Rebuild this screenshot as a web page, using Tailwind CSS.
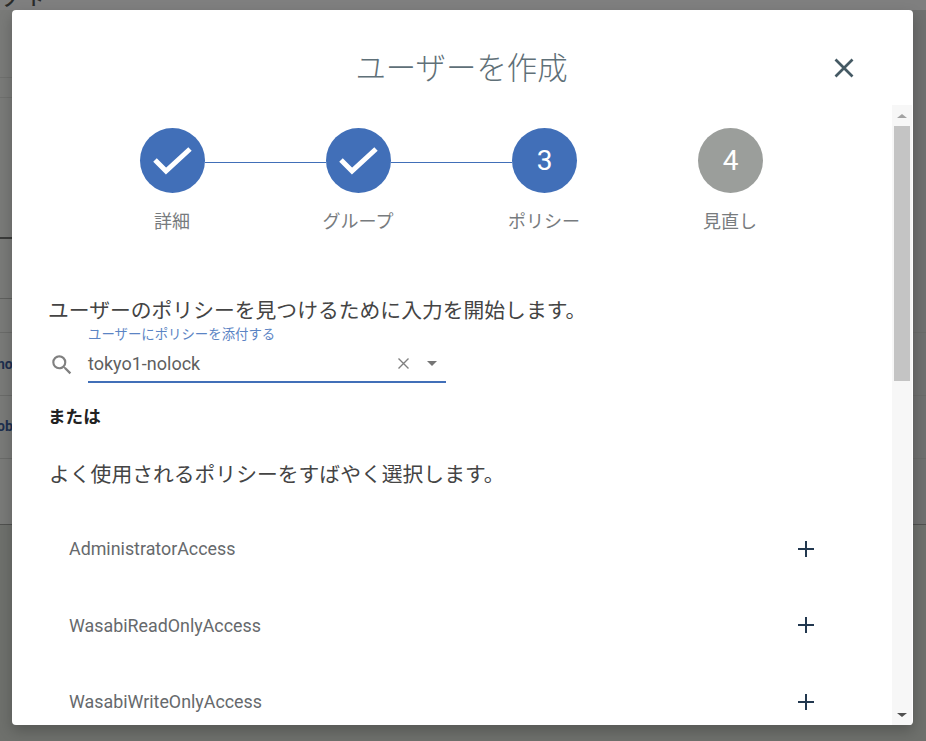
<!DOCTYPE html>
<html lang="ja">
  <head>
    <meta charset="UTF-8">
    <title>ユーザーを作成</title>
    <script src="https://cdn.jsdelivr.net/npm/@tailwindcss/browser@4"></script>
  </head>

  <body class="relative w-[926px] h-[741px] overflow-hidden bg-[#797a78] font-['Roboto','Noto_Sans_CJK_JP',sans-serif]">
    <!-- page behind the dialog, only the edges show -->
    <div class="absolute inset-0 text-[#1d2f4f] font-bold text-[14px]">
      <div class="absolute inset-x-0 top-0 h-[10px] bg-[#7f7f7f]"></div>
      <div class="absolute right-0 top-[10px] w-[14px] h-[515px] bg-[#6f706f]"></div>
      <div class="absolute inset-x-0 top-[525px] bottom-0 bg-[#6e706c]"></div>
      <div class="absolute left-0 top-[77px] w-[12px] h-px bg-[#6f706e]"></div>
      <div class="absolute left-0 top-[97px] w-[12px] h-px bg-[#6f706e]"></div>
      <div class="absolute left-0 top-[237px] w-[12px] h-[2px] bg-[#3a3b3a]"></div>
      <div class="absolute left-0 top-[298px] w-[12px] h-px bg-[#5f605e]"></div>
      <div class="absolute inset-x-0 top-[332px] h-px bg-[#6a6b69]"></div>
      <div class="absolute inset-x-0 top-[395px] h-px bg-[#6a6b69]"></div>
      <div class="absolute inset-x-0 top-[458px] h-px bg-[#6a6b69]"></div>
      <div class="absolute inset-x-0 top-[524px] h-px bg-[#50514f]"></div>
      <span class="absolute left-[3px] top-[-9px] text-[#2a2b2a] text-[16px] leading-[20px]">ノ</span>
      <span class="absolute left-[28px] top-[-10px] text-[#2a2b2a] text-[16px] leading-[20px]">ド</span>
      <span class="absolute left-[-3px] top-[355px] leading-[18px]">no</span>
      <span class="absolute left-[-3px] top-[417px] leading-[18px]">ob</span>
    </div>

    <!-- dialog -->
    <div class="absolute left-[12px] top-[10px] w-[901px] h-[715px] bg-white rounded-[4px] shadow-[0_6px_14px_rgba(0,0,0,0.22)] overflow-hidden flex flex-col">
      <header class="relative h-[95px] shrink-0 flex justify-center pt-[37px]">
        <h1 class="text-[#5f7078] text-[30.400px] leading-[44px] font-light -translate-x-[1px]">ユーザーを作成</h1>
        <svg class="absolute left-[820px] top-[46px] w-[24px] h-[24px]" viewBox="0 0 24 24" fill="none" stroke="#455a64" stroke-width="2.7"><path d="M3.500 3.500l17 17M20.500 3.500l-17 17"/></svg>
      </header>

      <div class="flex flex-1 min-h-0">
        <main class="flex-1 min-w-0 overflow-hidden">
          <!-- stepper -->
          <div class="pl-[128px] pt-[23px] flex items-start">
            <div class="w-[65px] h-[65px] rounded-full bg-[#416fb8] flex items-center justify-center shrink-0">
              <svg class="w-[39px] h-[28px]" viewBox="0 0 39 28" fill="none" stroke="#fff" stroke-width="5"><path d="M2 13l11 11L37 2"/></svg>
            </div>
            <div class="w-[121px] h-px mt-[34px] bg-[#416fb8]"></div>
            <div class="w-[65px] h-[65px] rounded-full bg-[#416fb8] flex items-center justify-center shrink-0">
              <svg class="w-[39px] h-[28px]" viewBox="0 0 39 28" fill="none" stroke="#fff" stroke-width="5"><path d="M2 13l11 11L37 2"/></svg>
            </div>
            <div class="w-[121px] h-px mt-[34px] bg-[#416fb8]"></div>
            <div class="w-[65px] h-[65px] rounded-full bg-[#416fb8] flex items-center justify-center shrink-0 text-white text-[28px]">3</div>
            <div class="w-[121px]"></div>
            <div class="w-[65px] h-[65px] rounded-full bg-[#9b9e9b] flex items-center justify-center shrink-0 text-white text-[28px]">4</div>
          </div>
          <div class="pl-[67px] mt-[16px] grid grid-cols-[186px_186px_186px_186px] text-center text-[#777b7e] text-[18px] leading-[26px]">
            <span>詳細</span>
            <span>グループ</span>
            <span>ポリシー</span>
            <span>見直し</span>
          </div>

          <div class="pl-[37px] mt-[61px]">
            <p class="text-[#444] text-[20.8px] leading-[30px] -translate-x-[1px]">ユーザーのポリシーを見つけるために入力を開始します。</p>
            <div class="flex items-end mt-[1px]">
              <svg class="w-[26px] h-[26px] mb-[5px] mr-[13px]" viewBox="0 0 24 24" fill="#808080"><path d="M15.5 14h-.79l-.28-.27A6.47 6.47 0 0 0 16 9.5 6.5 6.5 0 1 0 9.5 16c1.61 0 3.09-.59 4.23-1.57l.27.28v.79l5 4.99L20.49 19l-4.99-5zm-6 0C7.01 14 5 11.99 5 9.5S7.01 5 9.5 5 14 7.01 14 9.5 11.99 14 9.5 14z"/></svg>
              <div class="w-[358px]">
                <label class="block text-[#5b84c4] text-[13.4px] leading-[16px]">ユーザーにポリシーを添付する</label>
                <div class="flex items-center h-[40px] pt-[2px] border-b-2 border-[#416fb8]">
                  <span class="flex-1 text-[#5f5f5f] text-[18px]">tokyo1-nolock</span>
                  <svg class="w-[11px] h-[11px]" viewBox="0 0 11 11" fill="none" stroke="#808080" stroke-width="1.4"><path d="M.5.500l10 10M10.500.500l-10 10"/></svg>
                  <span class="ml-[18px] mr-[9px] w-0 h-0 border-x-[5px] border-x-transparent border-t-[5px] border-t-[#757575]"></span>
                </div>
              </div>
            </div>
            <p class="mt-[22px] text-[#222] text-[17.6px] leading-[24px] font-bold -translate-x-[1px]">または</p>
            <p class="mt-[31px] text-[#444] text-[20.8px] leading-[30px]">よく使用されるポリシーをすばやく選択します。</p>
          </div>

          <!-- quick pick policies -->
          <ul class="mt-[21px] pl-[57px] pr-[78px] text-[#66696c] text-[17.85px]">
            <li class="h-[76.3px] flex items-center justify-between">AdministratorAccess
              <svg class="w-[16px] h-[16px]" viewBox="0 0 16 16" fill="none" stroke="#22384f" stroke-width="2"><path d="M0 8h16M8 0v16"/></svg>
            </li>
            <li class="h-[76.3px] flex items-center justify-between"><span class="translate-y-[1px]">WasabiReadOnlyAccess</span>
              <svg class="w-[16px] h-[16px]" viewBox="0 0 16 16" fill="none" stroke="#22384f" stroke-width="2"><path d="M0 8h16M8 0v16"/></svg>
            </li>
            <li class="h-[76.3px] flex items-center justify-between"><span class="translate-y-[1px]">WasabiWriteOnlyAccess</span>
              <svg class="w-[16px] h-[16px]" viewBox="0 0 16 16" fill="none" stroke="#22384f" stroke-width="2"><path d="M0 8h16M8 0v16"/></svg>
            </li>
          </ul>
        </main>

        <!-- scrollbar -->
        <div class="w-[20px] mr-px shrink-0 bg-[#f7f7f7] flex flex-col items-center">
          <div class="h-[21px] flex items-center justify-center shrink-0">
            <span class="w-0 h-0 border-x-[5px] border-x-transparent border-b-[4px] border-b-[#a3a3a3]"></span>
          </div>
          <div class="w-[16px] h-[255px] bg-[#c4c4c4]"></div>
          <div class="flex-1"></div>
          <div class="h-[21px] flex items-center justify-center shrink-0">
            <span class="w-0 h-0 border-x-[5px] border-x-transparent border-t-[4px] border-t-[#505050]"></span>
          </div>
        </div>
      </div>
    </div>
  </body>
</html>
